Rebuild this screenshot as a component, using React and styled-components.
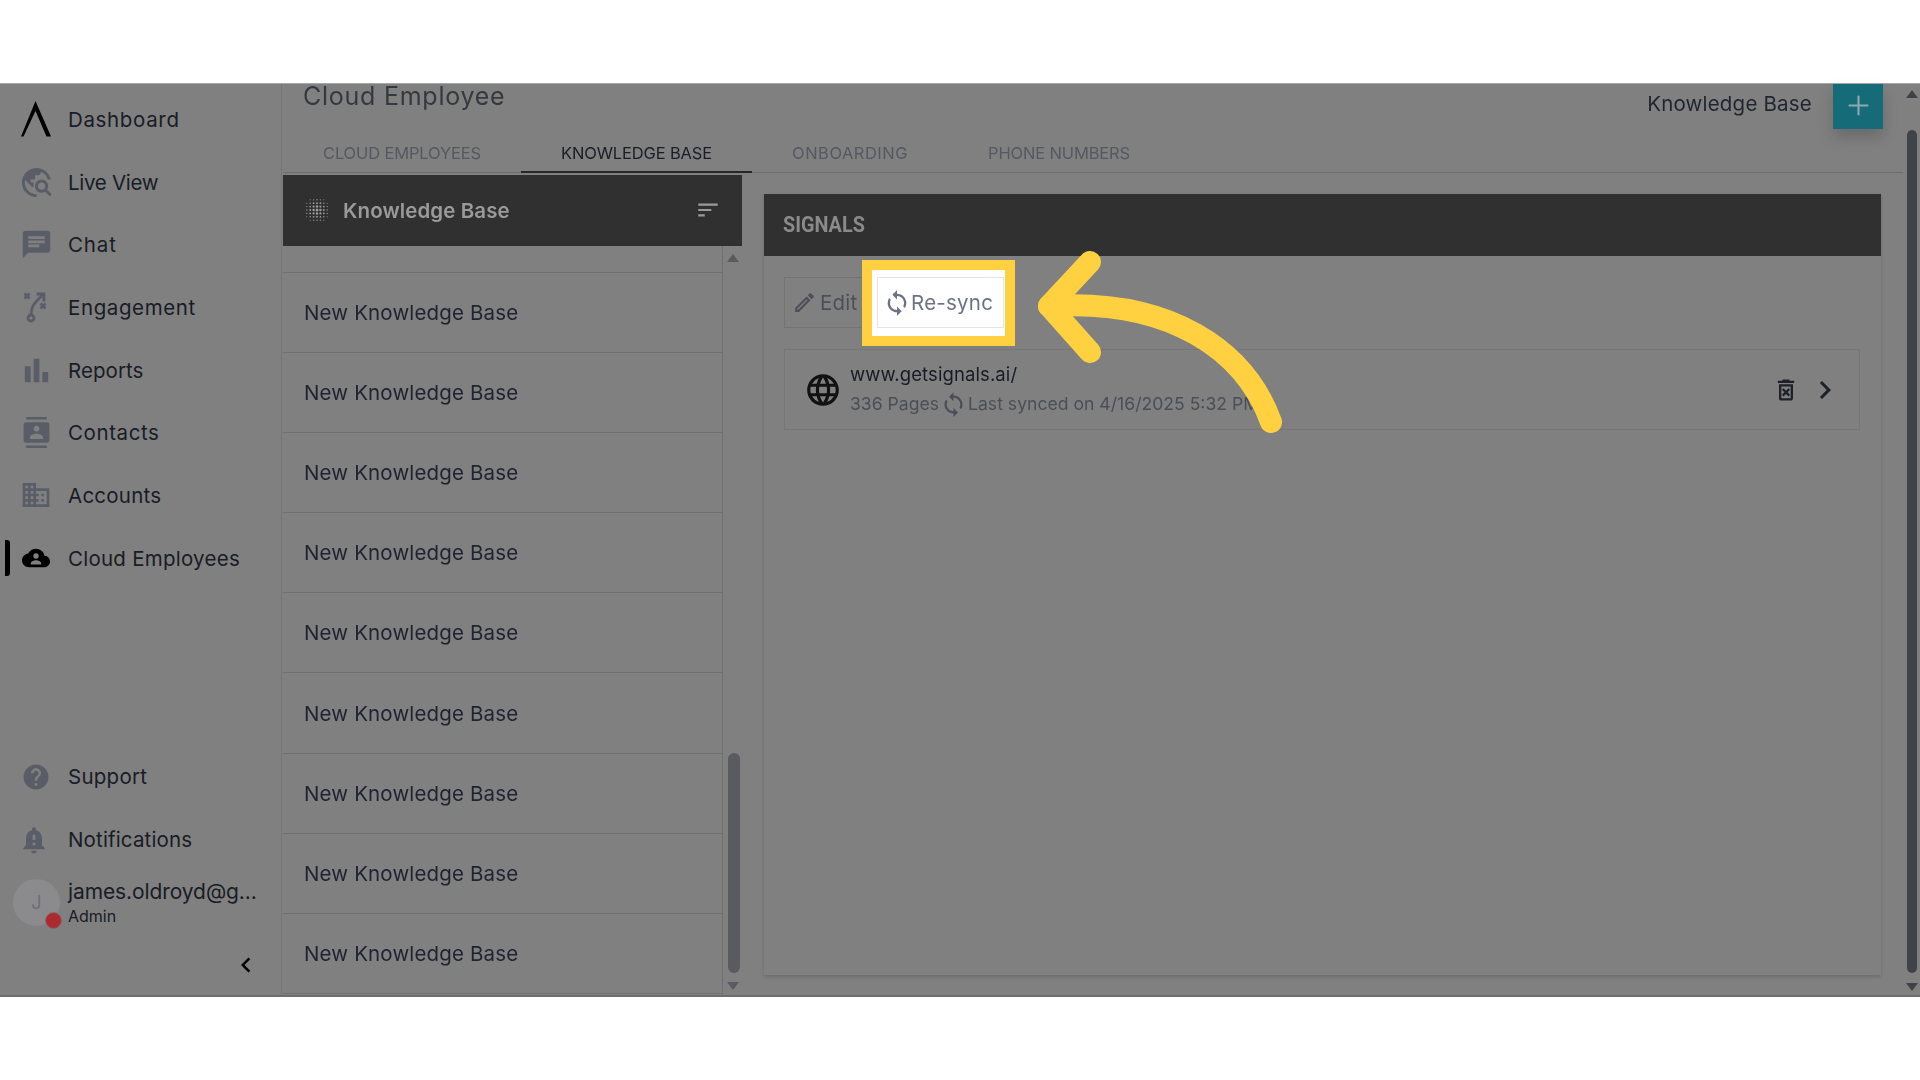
import React from 'react';
import styled, { createGlobalStyle } from 'styled-components';
import {
  MdTravelExplore, MdChat, MdBarChart, MdContacts, MdDomain, MdHelp,
  MdNotificationImportant, MdSync, MdOutlineEdit, MdLanguage, MdOutlineDeleteForever,
  MdChevronLeft, MdChevronRight, MdSort,
} from 'react-icons/md';
import { Plus } from 'lucide-react';

const FONT = '"Inter", "Noto Sans", sans-serif';

const Global = createGlobalStyle`
  html, body { margin: 0; padding: 0; background: #fff; }
  body { font-family: ${FONT}; overflow: hidden; }
  * { box-sizing: border-box; }
`;

const Screen = styled.div`
  position: relative;
  width: 1920px;
  height: 1080px;
  background: #fff;
  padding-top: 83px;
`;
const App = styled.div`
  display: flex;
  height: 914px;
  background: #808080;
  border-top: 1px solid #a8a8a8;
  border-bottom: 2px solid #6e6e6a;
  filter: blur(0.35px);
`;

/* sidebar */
const Sidebar = styled.aside`
  flex: 0 0 282px;
  display: flex;
  flex-direction: column;
  border-right: 1px solid #757575;
  padding-top: 4px;
`;
const Nav = styled.nav`
  display: flex;
  flex-direction: column;
  flex: 1;
`;
const NavSpacer = styled.div`
  flex: 1;
`;
const NavItem = styled.div`
  position: relative;
  display: flex;
  align-items: center;
  height: 62.7px;
  padding-left: 18px;
  gap: 14px;
  font-size: 20.5px;
  letter-spacing: ${(p) => p.$spacing || '0.25px'};
  color: #181c25;
  white-space: nowrap;
  &::before {
    content: '';
    display: ${(p) => (p.$active ? 'block' : 'none')};
    position: absolute;
    left: 5px;
    top: 13px;
    width: 5px;
    height: 36px;
    background: #000;
    border-radius: 0 3px 3px 0;
  }
`;
const IconSlot = styled.span`
  flex: 0 0 36px;
  height: 36px;
  display: flex;
  align-items: center;
  justify-content: center;
  color: ${(p) => p.$color || '#585d67'};
`;
const BellIcon = styled(MdNotificationImportant)`
  margin-left: -4px;
`;
const UserRow = styled.div`
  display: flex;
  align-items: center;
  height: 62px;
  padding-left: 13px;
  gap: 8px;
`;
const Avatar = styled.div`
  position: relative;
  flex: 0 0 47px;
  height: 47px;
  border-radius: 50%;
  background: #8b8b8e;
  color: #6c6f76;
  font-size: 18px;
  display: flex;
  align-items: center;
  justify-content: center;
`;
const StatusDot = styled.span`
  position: absolute;
  right: -2px;
  bottom: -3px;
  width: 17px;
  height: 17px;
  border-radius: 50%;
  background: #ad2a2e;
  border: 1px solid #8a6a6a;
`;
const UserText = styled.div`
  display: flex;
  flex-direction: column;
  gap: 1px;
`;
const UserName = styled.div`
  font-size: 21px;
  letter-spacing: -0.1px;
  line-height: 27px;
  color: #181c25;
  white-space: nowrap;
`;
const UserRole = styled.div`
  font-size: 16px;
  line-height: 20px;
  color: #181c25;
`;
const Collapse = styled.div`
  height: 62px;
  padding: 2px 20px 0 0;
  display: flex;
  align-items: center;
  justify-content: flex-end;
  color: #000;
`;

/* main */
const Main = styled.main`
  flex: 1;
  min-width: 0;
  display: flex;
  flex-direction: column;
`;
const Header = styled.header`
  display: flex;
  justify-content: space-between;
  align-items: flex-start;
  height: 45px;
  padding-left: 21px;
  padding-right: 20px;
`;
const Title = styled.h1`
  margin: 0;
  font-size: 25px;
  font-weight: 400;
  line-height: 24px;
  letter-spacing: 0.75px;
  color: #35383e;
`;
const HeaderRight = styled.div`
  display: flex;
  align-items: center;
  gap: 21px;
`;
const HeaderLabel = styled.span`
  font-size: 20.5px;
  letter-spacing: 0.2px;
  color: #1f2530;
  margin-top: -6px;
`;
const AddButton = styled.button`
  width: 50px;
  height: 45px;
  border: 0;
  padding: 0 0 3px;
  background: #166b79;
  color: #8fa9ae;
  display: flex;
  align-items: center;
  justify-content: center;
  box-shadow: 0 8px 14px rgba(0, 0, 0, 0.18);
`;
const Tabs = styled.div`
  display: flex;
  height: 44px;
  margin-left: 1px;
  border-bottom: 1px solid #6c6c70;
`;
const Tab = styled.div`
  display: flex;
  align-items: center;
  padding: 5px 40px 0;
  height: 44px;
  font-size: 16.5px;
  letter-spacing: ${(p) => p.$spacing || '-0.15px'};
  white-space: nowrap;
  color: ${(p) => (p.$active ? '#1a1d24' : '#55585f')};
  border-bottom: 2px solid ${(p) => (p.$active ? '#22262d' : 'transparent')};
`;
const Body = styled.div`
  flex: 1;
  display: flex;
  min-height: 0;
  padding-left: 1px;
  padding-top: 2px;
  gap: 22px;
`;

/* knowledge list */
const ListPanel = styled.section`
  flex: 0 0 459px;
  display: flex;
  flex-direction: column;
`;
const ListHead = styled.div`
  height: 71px;
  flex: 0 0 71px;
  background: #303030;
  display: flex;
  align-items: center;
  padding: 0 21px 1px 22px;
  gap: 14px;
  color: #9a9a9a;
`;
const ListHeadText = styled.div`
  flex: 1;
  font-size: 20.5px;
  font-weight: 600;
  letter-spacing: 0.1px;
`;
const ListBody = styled.div`
  flex: 1;
  display: flex;
  min-height: 0;
`;
const Rows = styled.div`
  flex: 0 0 440px;
  border-right: 1px solid #707070;
`;
const Stub = styled.div`
  height: 27px;
  border-bottom: 1px solid #707070;
`;
const Row = styled.div`
  height: 80.1px;
  display: flex;
  align-items: center;
  padding-left: 21px;
  border-bottom: 1px solid #707070;
  font-size: 20.5px;
  letter-spacing: 0.15px;
  color: #1d2330;
`;
const Track = styled.div`
  position: relative;
  flex: 0 0 19px;
  display: flex;
  flex-direction: column;
  justify-content: space-between;
  align-items: center;
  padding: 8px 0 5px;
`;
const ScrollArrow = styled.span`
  width: 0;
  height: 0;
  border-left: 6px solid transparent;
  border-right: 6px solid transparent;
  ${(p) => (p.$down ? 'border-top' : 'border-bottom')}: 8px solid ${(p) => p.$color};
`;
const ListThumb = styled.div`
  position: absolute;
  left: 5px;
  top: 507px;
  bottom: 22px;
  width: 12px;
  border-radius: 6px;
  background: #5a5b60;
`;

/* detail */
const Detail = styled.section`
  flex: 0 0 1117px;
  height: 781px;
  margin-top: 19px;
  display: flex;
  flex-direction: column;
  box-shadow: 0 2px 4px rgba(0, 0, 0, 0.16);
`;
const DetailHead = styled.div`
  height: 62px;
  flex: 0 0 62px;
  background: #303030;
  display: flex;
  align-items: center;
  padding: 0 0 2px 19px;
`;
const DetailTitle = styled.h2`
  margin: 0;
  font-family: Roboto, sans-serif;
  font-size: 22px;
  font-weight: 700;
  color: #8a8a8a;
  transform: scaleX(0.9);
  transform-origin: left center;
`;
const DetailBody = styled.div`
  padding: 21px 21px 0 20px;
`;
const ButtonGroup = styled.div`
  display: flex;
  height: 51px;
`;
const ToolButton = styled.button`
  display: flex;
  align-items: center;
  height: 51px;
  font-family: ${FONT};
  font-size: 20.5px;
  letter-spacing: 0.25px;
  padding: 0;
  gap: 3px;
`;
const EditButton = styled(ToolButton)`
  width: 93px;
  padding-left: 7px;
  background: transparent;
  border: 1px solid #747474;
  color: #4b4f57;
`;
const ResyncWrap = styled.div`
  position: relative;
`;
const Highlight = styled.div`
  position: absolute;
  left: -15px;
  right: -11px;
  top: -17px;
  bottom: -18px;
  border: 10px solid #ffd140;
  background: #fff;
`;
const ResyncButton = styled(ToolButton)`
  position: relative;
  width: 127px;
  padding-left: 5px;
  gap: 0;
  background: #fff;
  border: 1px solid #e4e4e6;
  color: #6b7280;
`;
const SourceRow = styled.div`
  display: flex;
  align-items: center;
  height: 81px;
  margin-top: 21px;
  padding-left: 19px;
  border: 1px solid #767676;
`;
const SourceText = styled.div`
  flex: 1;
  margin-left: 8px;
  display: flex;
  flex-direction: column;
  gap: 5px;
`;
const SourceUrl = styled.div`
  font-size: 18.5px;
  line-height: 24px;
  letter-spacing: 0.1px;
  color: #171b24;
`;
const SourceMeta = styled.div`
  display: flex;
  align-items: center;
  gap: 1px;
  font-size: 17.6px;
  line-height: 24px;
  color: #4a4e57;
  white-space: nowrap;
`;
const SourceActions = styled.div`
  display: flex;
  align-items: center;
  gap: 7px;
  padding-right: 16px;
  color: #1d2129;
`;

/* page scrollbar */
const PageScroll = styled.div`
  position: relative;
  flex: 0 0 17px;
  min-width: 0;
  display: flex;
  flex-direction: column;
  justify-content: space-between;
  align-items: center;
  padding: 6px 0 4px;
`;
const PageThumb = styled.div`
  position: absolute;
  left: 4px;
  top: 46px;
  bottom: 22px;
  width: 10px;
  border-radius: 5px;
  background: #3f4247;
`;
const ArrowLayer = styled.svg`
  position: absolute;
  left: 0;
  top: 0;
  pointer-events: none;
`;

const LogoIcon = () => (
  <svg width="30" height="36" viewBox="0 0 30 36"><path d="M14.5 0 L30 35.5 L25.5 35.5 L14.5 10 L2.5 35.5 L0 35.5 Z" fill="#000" /></svg>
);
const EngagementIcon = () => (
  <svg width="30" height="36" viewBox="0 0 30 36" fill="none" stroke="currentColor" strokeWidth="2.8">
    <circle cx="10" cy="29" r="3" />
    <path d="M10 26 C10 16 15 13 21.5 6" />
    <path d="M15.5 5 H23 V12.5" />
    <path d="M3.5 4.5 L8.5 9.5 M8.5 4.5 L3.5 9.5" />
    <path d="M19.5 14.5 L24.5 19.5 M24.5 14.5 L19.5 19.5" />
  </svg>
);
const CloudPersonIcon = () => (
  <svg width="28" height="28" viewBox="0 0 24 24">
    <path fill="#000" d="M19.35 10.04C18.67 6.59 15.64 4 12 4 9.11 4 6.6 5.64 5.35 8.04 2.34 8.36 0 10.91 0 14c0 3.31 2.69 6 6 6h13c2.76 0 5-2.24 5-5 0-2.64-2.05-4.78-4.65-4.96z" />
    <circle cx="12" cy="10.3" r="2.3" fill="#808080" />
    <path fill="#808080" d="M7.6 17.6 v-1 c0-1.6 2.6-2.6 4.4-2.6 s4.4 1 4.4 2.6 v1 z" />
  </svg>
);
const DotsIcon = () => {
  const dots = [];
  for (let x = -3; x <= 3; x++) {
    for (let y = -3; y <= 3; y++) {
      const d = Math.hypot(x, y);
      if (d < 3.7) dots.push(<circle key={`${x}${y}`} cx={12 + x * 3.4} cy={12 + y * 3.4} r={1.5 - d * 0.27} fill="#9a9a9a" />);
    }
  }
  return <svg width="24" height="24" viewBox="0 0 24 24">{dots}</svg>;
};

const topNav = [
  { label: 'Dashboard', icon: <LogoIcon />, spacing: '0.65px' },
  { label: 'Live View', icon: <MdTravelExplore size={35} />, spacing: '-0.3px' },
  { label: 'Chat', icon: <MdChat size={33} />, spacing: '0.85px' },
  { label: 'Engagement', icon: <EngagementIcon />, spacing: '0.6px' },
  { label: 'Reports', icon: <MdBarChart size={35} />, spacing: '0.05px' },
  { label: 'Contacts', icon: <MdContacts size={31} />, spacing: '0.6px' },
  { label: 'Accounts', icon: <MdDomain size={32} /> },
  { label: 'Cloud Employees', icon: <CloudPersonIcon />, active: true },
];
const tabs = [
  ['CLOUD EMPLOYEES'],
  ['KNOWLEDGE BASE'],
  ['ONBOARDING', '0.5px'],
  ['PHONE NUMBERS'],
];

export default function Page() {
  return (
    <Screen>
      <Global />
      <App>
        <Sidebar>
          <Nav>
            {topNav.map(({ label, icon, spacing, active }) => (
              <NavItem key={label} $active={active} $spacing={spacing}>
                <IconSlot $color={active ? '#000' : undefined}>{icon}</IconSlot>
                {label}
              </NavItem>
            ))}
            <NavSpacer />
            <NavItem><IconSlot><MdHelp size={30} /></IconSlot>Support</NavItem>
            <NavItem $spacing="0.15px"><IconSlot><BellIcon size={32} /></IconSlot>Notifications</NavItem>
            <UserRow>
              <Avatar>J<StatusDot /></Avatar>
              <UserText>
                <UserName>james.oldroyd@g...</UserName>
                <UserRole>Admin</UserRole>
              </UserText>
            </UserRow>
            <Collapse><MdChevronLeft size={30} /></Collapse>
          </Nav>
        </Sidebar>
        <Main>
          <Header>
            <Title>Cloud Employee</Title>
            <HeaderRight>
              <HeaderLabel>Knowledge Base</HeaderLabel>
              <AddButton><Plus size={31} strokeWidth={1.6} /></AddButton>
            </HeaderRight>
          </Header>
          <Tabs>
            {tabs.map(([t, spacing]) => <Tab key={t} $active={t === 'KNOWLEDGE BASE'} $spacing={spacing}>{t}</Tab>)}
          </Tabs>
          <Body>
            <ListPanel>
              <ListHead>
                <DotsIcon />
                <ListHeadText>Knowledge Base</ListHeadText>
                <MdSort size={26} />
              </ListHead>
              <ListBody>
                <Rows>
                  <Stub />
                  {Array.from({ length: 9 }, (_, i) => <Row key={i}>New Knowledge Base</Row>)}
                </Rows>
                <Track>
                  <ScrollArrow $color="#5a5b60" />
                  <ListThumb />
                  <ScrollArrow $down $color="#5a5b60" />
                </Track>
              </ListBody>
            </ListPanel>
            <Detail>
              <DetailHead><DetailTitle>SIGNALS</DetailTitle></DetailHead>
              <DetailBody>
                <ButtonGroup>
                  <EditButton><MdOutlineEdit size={25} />Edit</EditButton>
                  <ResyncWrap>
                    <Highlight />
                    <ResyncButton><MdSync size={28} />Re-sync</ResyncButton>
                  </ResyncWrap>
                </ButtonGroup>
                <SourceRow>
                  <MdLanguage size={38} color="#111" />
                  <SourceText>
                    <SourceUrl>www.getsignals.ai/</SourceUrl>
                    <SourceMeta>336 Pages <MdSync size={27} /> Last synced on 4/16/2025 5:32 PM</SourceMeta>
                  </SourceText>
                  <SourceActions>
                    <MdOutlineDeleteForever size={28} />
                    <MdChevronRight size={36} />
                  </SourceActions>
                </SourceRow>
              </DetailBody>
            </Detail>
          </Body>
        </Main>
        <PageScroll>
          <ScrollArrow $color="#3f4247" />
          <PageThumb />
          <ScrollArrow $down $color="#3f4247" />
        </PageScroll>
      </App>
      <ArrowLayer width="1920" height="1080" viewBox="0 0 1920 1080" fill="none" stroke="#ffd140" strokeWidth="22" strokeLinecap="round" strokeLinejoin="round">
        <path d="M1271 422 C1245 350 1170 298 1049 306" />
        <path d="M1090 262 L1049 306 L1090 352" />
      </ArrowLayer>
    </Screen>
  );
}
